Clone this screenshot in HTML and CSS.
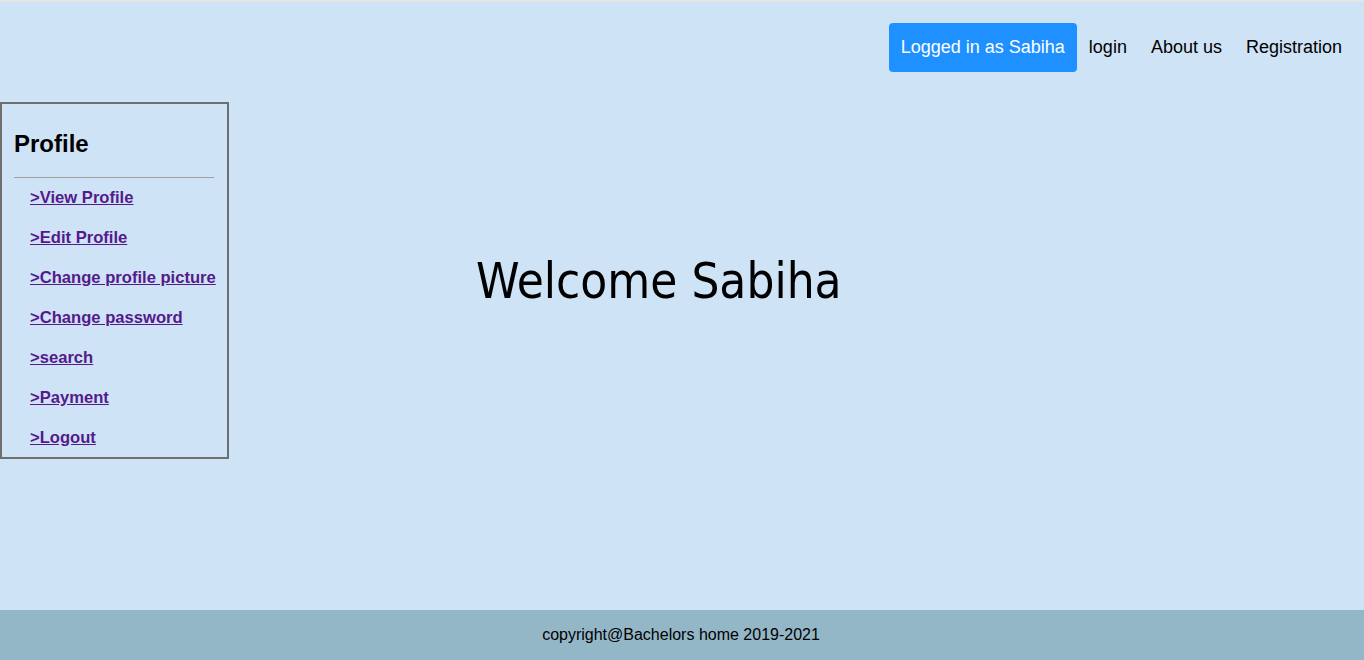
FILE: index.html
```html
<!DOCTYPE html>
<html>
<head>
<meta charset="utf-8">
<link rel="stylesheet" href="styles.css">
</head>
<body>
<div class="page">
  <header class="topbar">
    <nav class="nav">
      <a class="nav-btn">Logged in as Sabiha</a>
      <a class="nav-link" href="#">login</a>
      <a class="nav-link" href="#">About us</a>
      <a class="nav-link" href="#">Registration</a>
    </nav>
  </header>
  <div class="main">
    <aside class="sidebar">
      <h2 class="side-title">Profile</h2>
      <hr class="side-rule">
      <ul class="side-list">
        <li><a href="#">&gt;View Profile</a></li>
        <li><a href="#">&gt;Edit Profile</a></li>
        <li><a href="#">&gt;Change profile picture</a></li>
        <li><a href="#">&gt;Change password</a></li>
        <li><a href="#">&gt;search</a></li>
        <li><a href="#">&gt;Payment</a></li>
        <li><a href="#">&gt;Logout</a></li>
      </ul>
    </aside>
    <section class="content">
      <h1 class="welcome">Welcome Sabiha</h1>
    </section>
  </div>
  <footer class="footer">copyright@Bachelors home 2019-2021</footer>
</div>
</body>
</html>
```
FILE: styles.css
```css
* { box-sizing: border-box; }
html, body { margin: 0; padding: 0; }
body {
  background: #cfe3f7;
  font-family: "Liberation Sans", Arial, sans-serif;
  color: #000;
}
.page {
  height: 660px;
  display: flex;
  flex-direction: column;
  border-top: 2px solid #e2e4e6;
}
.topbar {
  height: 100px;
  display: flex;
  justify-content: flex-end;
  align-items: flex-start;
  padding: 21px 10px 0 0;
}
.nav {
  display: flex;
  align-items: center;
  height: 49px;
}
.nav-btn {
  background: #1e90ff;
  color: #fff;
  border-radius: 4px;
  height: 49px;
  line-height: 49px;
  padding: 0 12px;
  font-size: 18px;
}
.nav-link {
  color: #000;
  text-decoration: none;
  font-size: 18px;
  padding: 0 12px;
}
.main {
  flex: 1;
  display: flex;
  align-items: flex-start;
}
.sidebar {
  width: 229px;
  height: 357px;
  border: 2px solid #6f6f6f;
  padding: 0 13px 0 12px;
}
.side-title {
  margin: 26px 0 0 0;
  font-size: 24px;
  font-weight: bold;
  line-height: 28px;
}
.side-rule {
  margin: 19px 0 0 0;
  border: 0;
  border-top: 1px solid #a0a0a0;
  height: 0;
}
.side-list {
  list-style: none;
  margin: 10px 0 0 0;
  padding: 0 0 0 16px;
}
.side-list li {
  height: 40px;
  line-height: 20px;
}
.side-list a {
  color: #551a8b;
  font-weight: bold;
  font-size: 16.6px;
  text-decoration: underline;
  white-space: nowrap;
}
.content {
  flex: 1;
  padding: 150px 0 0 247px;
}
.welcome {
  margin: 0;
  font-family: "DejaVu Sans Condensed", "DejaVu Sans", sans-serif;
  font-stretch: condensed;
  font-weight: normal;
  font-size: 49px;
  line-height: 60px;
}
.footer {
  height: 50px;
  background: #94b7c8;
  display: flex;
  align-items: center;
  justify-content: center;
  font-size: 16px;
  padding-right: 2px;
}
```
